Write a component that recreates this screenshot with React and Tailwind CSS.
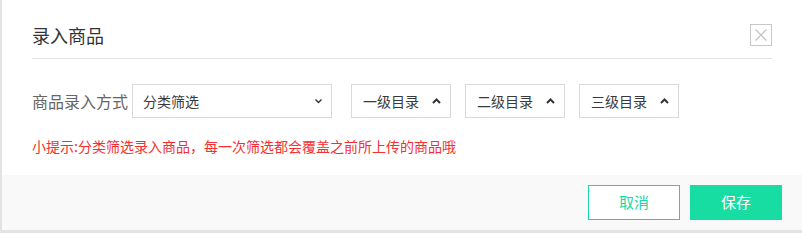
function Chevron({ up }) {
  return (
    <svg width="9" height="6" viewBox="0 0 9 6" fill="none" stroke="#333" strokeWidth={up ? "2" : "1.4"} className="block">
      {up ? <path d="M1 5L4.5 1.5L8 5" /> : <path d="M1.5 1.5L4.5 4.5L7.5 1.5" />}
    </svg>
  )
}

function LevelBox({ label }) {
  return (
    <div className="w-[100px] h-[34px] border border-[#dadada] flex items-center justify-between pl-[11px] pr-[9px] text-[14px] text-[#3a3a3a]">
      <span>{label}</span>
      <Chevron up />
    </div>
  )
}

export default function App() {
  return (
    <div
      className="w-[802px] h-[233px] bg-white border-l-2 border-b-[3px] border-[#e3e3e3] flex flex-col"
      style={{ fontFamily: '"Noto Sans CJK SC", "Noto Sans", sans-serif' }}
    >
      <header className="ml-[30px] mr-[30px] pt-[24px] pb-[12px] border-b border-[#e3e3e3] flex items-center justify-between">
        <h1 className="text-[18px] leading-[22px] text-[#333]">录入商品</h1>
        <button className="w-[22px] h-[22px] border border-[#c8c8c8] flex items-center justify-center">
          <svg width="14" height="14" viewBox="0 0 14 14" stroke="#c4c4c4" strokeWidth="1.2" className="block">
            <path d="M1.5 1.5L12.5 12.5M12.5 1.5L1.5 12.5" />
          </svg>
        </button>
      </header>

      <main className="flex-1 px-[30px] pt-[25px]">
        <div className="flex items-center">
          <span className="text-[16px] text-[#666] mr-[4px]">商品录入方式</span>
          <div className="w-[200px] h-[34px] border border-[#dadada] flex items-center justify-between pl-[10px] pr-[8px] text-[14px] text-[#3a3a3a]">
            <span>分类筛选</span>
            <Chevron />
          </div>
          <div className="ml-[19px] flex gap-[14px]">
            <LevelBox label="一级目录" />
            <LevelBox label="二级目录" />
            <LevelBox label="三级目录" />
          </div>
        </div>
        <p className="mt-[19px] text-[14px] leading-[18px] text-[#f52f2f]">
          小提示:分类筛选录入商品，每一次筛选都会覆盖之前所上传的商品哦
        </p>
      </main>

      <footer className="h-[55px] bg-[#f9f9f9] flex items-center justify-end gap-[10px] pr-[20px]">
        <button className="w-[92px] h-[35px] border border-[#19d9a3] bg-white text-[#19d9a3] text-[15px]">取消</button>
        <button className="w-[92px] h-[35px] bg-[#17dda3] text-white text-[15px]">保存</button>
      </footer>
    </div>
  )
}
